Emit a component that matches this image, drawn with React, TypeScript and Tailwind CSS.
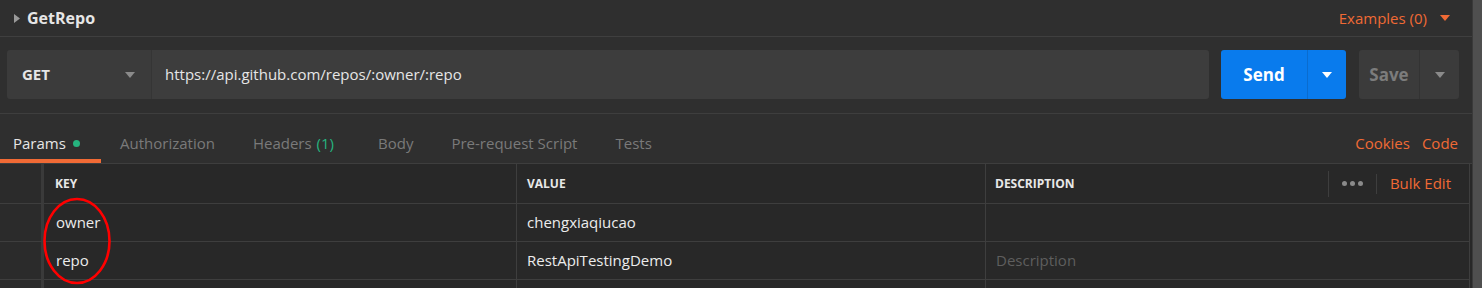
import { ReactNode } from 'react';

const tabs = [
    { label: 'Authorization', extra: '' },
    { label: 'Headers', count: '(1)', extra: 'mr-[25px]' },
    { label: 'Body', extra: '' },
    { label: 'Pre-request Script', extra: '' },
    { label: 'Tests', extra: '' },
];

const rows = [
    { key: 'owner', value: 'chengxiaqiucao', description: '' },
    { key: 'repo', value: 'RestApiTestingDemo', description: '' },
];

function Caret({ className }: { className: string }) {
    return (
        <svg width="10" height="6" viewBox="0 0 10 6" className={className}>
            <path d="M0 0h10L5 6z" fill="currentColor" />
        </svg>
    );
}

function Cell({ children, className = '' }: { children?: ReactNode; className?: string }) {
    return (
        <div className={`flex items-center border-r border-b border-[#3e3e3e] ${className}`}>
            {children}
        </div>
    );
}

export default function App() {
    return (
        <div className="relative flex w-[1482px] h-[288px] overflow-hidden bg-[#2f2f2f] font-['Open_Sans',sans-serif]">
            <div className="flex-1 flex flex-col min-w-0">
                {/* request name */}
                <div className="shrink-0 h-[37px] flex items-center border-b border-[#3f3f3f] pl-[14px] pr-[22px]">
                    <svg width="6" height="9" viewBox="0 0 6 9" className="text-[#9a9a9a] mr-[7px]">
                        <path d="M0 0l6 4.5L0 9z" fill="currentColor" />
                    </svg>
                    <span className="text-[16px] font-bold text-[#e6e6e6]">GetRepo</span>
                    <div className="ml-auto flex items-center text-[#f06a35] text-[15px]">
                        <span>Examples (0)</span>
                        <Caret className="ml-[13px]" />
                    </div>
                </div>

                {/* url bar */}
                <div className="shrink-0 flex items-stretch h-[49px] mt-[13px] px-[7px]">
                    <div className="w-[145px] flex items-center bg-[#3b3b3b] rounded-l-[3px] border-r border-[#353535] pl-[15px] pr-[16px]">
                        <span className="text-[15px] font-bold text-[#e6e6e6]">GET</span>
                        <Caret className="ml-auto text-[#8a8a8a]" />
                    </div>
                    <div className="w-[1057px] flex items-center bg-[#3d3d3d] rounded-r-[3px] pl-[13px] text-[15px] text-[#e6e6e6]">
                        https://api.github.com/repos/:owner/:repo
                    </div>
                    <div className="ml-[12px] w-[125px] flex bg-[#097bed] rounded-[3px] text-white">
                        <div className="w-[87px] flex items-center justify-center text-[17px] font-bold border-r border-[#0a6ccf]">Send</div>
                        <div className="flex-1 flex items-center justify-center">
                            <Caret className="" />
                        </div>
                    </div>
                    <div className="ml-[13px] w-[100px] flex bg-[#3b3b3b] rounded-[3px]">
                        <div className="w-[61px] flex items-center justify-center text-[17px] font-bold text-[#7c7c7c] border-r border-[#333333]">Save</div>
                        <div className="flex-1 flex items-center justify-center">
                            <Caret className="text-[#8a8a8a]" />
                        </div>
                    </div>
                </div>

                {/* tabs */}
                <div className="shrink-0 mt-[14px] border-t border-[#3a3a3a] h-[51px] flex items-stretch border-b border-[#3e3e3e] pr-[14px]">
                    <div className="w-[101px] flex items-center pl-[13px] pt-[14px] border-b-[4px] border-[#f06a35] text-[15px] text-[#e6e6e6]">
                        Params
                        <span className="ml-[7px] w-[7px] h-[7px] rounded-full bg-[#26b47f]" />
                    </div>
                    {tabs.map((t) => (
                        <div key={t.label} className={`flex items-center pt-[10px] ml-[19px] text-[15px] text-[#7a7a7a] ${t.extra || 'mr-[19px]'}`}>
                            {t.label}
                            {t.count && <span className="ml-[5px] text-[#26b47f]">{t.count}</span>}
                        </div>
                    ))}
                    <div className="ml-auto flex items-center pt-[10px] gap-[12px] text-[15px] text-[#f06a35]">
                        <span>Cookies</span>
                        <span>Code</span>
                    </div>
                </div>

                {/* params table */}
                <div className="shrink-0 grid grid-cols-[44px_473px_469px_484px] auto-rows-min bg-[#282828]">
                    <Cell className="h-[40px] bg-[#2b2b2b] border-r-[3px] border-r-[#3a3a3a]" />
                    <Cell className="h-[40px] pl-[11px] text-[12px] font-bold text-[#e8e8e8]">KEY</Cell>
                    <Cell className="h-[40px] pl-[10px] text-[12px] font-bold text-[#e8e8e8]">VALUE</Cell>
                    <Cell className="h-[40px] pl-[9px] text-[12px] font-bold text-[#e8e8e8]">
                        DESCRIPTION
                        <div className="ml-auto flex items-center h-full">
                            <div className="w-px h-[26px] bg-[#3e3e3e]" />
                            <div className="flex gap-[3px] px-[13px]">
                                <span className="w-[5px] h-[5px] rounded-full bg-[#8a8a8a]" />
                                <span className="w-[5px] h-[5px] rounded-full bg-[#8a8a8a]" />
                                <span className="w-[5px] h-[5px] rounded-full bg-[#8a8a8a]" />
                            </div>
                            <div className="w-px h-[20px] bg-[#3e3e3e]" />
                            <span className="pl-[13px] pr-[18px] text-[15px] font-normal text-[#f06a35]">Bulk Edit</span>
                        </div>
                    </Cell>
                    {rows.map((r, i) => (
                        <div key={r.key} className="contents">
                            <Cell className="h-[38px] bg-[#2b2b2b] border-r-[3px] border-r-[#3a3a3a]" />
                            <Cell className="h-[38px] pl-[12px] text-[15px] text-[#ececec]">{r.key}</Cell>
                            <Cell className="h-[38px] pl-[10px] text-[15px] text-[#ececec]">{r.value}</Cell>
                            <Cell className="h-[38px] pl-[10px] text-[15px] text-[#5e5e5e]">
                                {i === rows.length - 1 ? 'Description' : r.description}
                            </Cell>
                        </div>
                    ))}
                    <Cell className="h-[38px] bg-[#2b2b2b] border-r-[3px] border-r-[#3a3a3a]" />
                    <Cell className="h-[38px]" />
                    <Cell className="h-[38px]" />
                    <Cell className="h-[38px]" />
                </div>
            </div>
            <div className="w-[10px] bg-[#4f4f4f] border-l border-[#3a3a3a]" />

            {/* hand-drawn annotation */}
            <svg className="absolute left-[43px] top-[196px] pointer-events-none" width="70" height="90" viewBox="0 0 70 90">
                <ellipse cx="34" cy="45" rx="32.5" ry="42" fill="none" stroke="#ff0000" strokeWidth="2.6" />
            </svg>
        </div>
    );
}
